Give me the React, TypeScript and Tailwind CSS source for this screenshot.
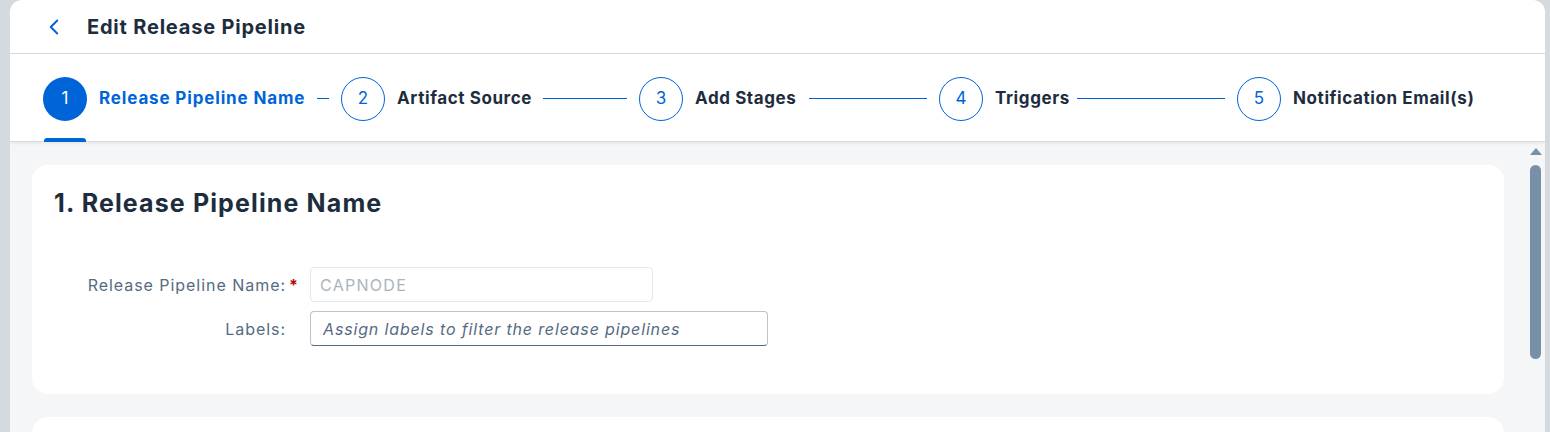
import { ChevronLeft } from "lucide-react";

const steps = [
  { n: 1, label: "Release Pipeline Name", width: 206, line: 12 },
  { n: 2, label: "Artifact Source", width: 134, line: 84 },
  { n: 3, label: "Add Stages", width: 102, line: 118 },
  { n: 4, label: "Triggers", width: 70, line: 148 },
  { n: 5, label: "Notification Email(s)", width: 184, line: 0 },
];

function Stepper() {
  return (
    <div className="h-[88px] shrink-0 border-b border-[#d9dde1] shadow-[0_1px_3px_rgba(0,0,0,0.08)] pl-[33px] pt-[2px] flex items-center relative z-10">
      {steps.map((s) => {
        const active = s.n === 1;
        return (
          <div key={s.n} className="flex items-center">
            <div className="relative flex items-center">
              <div
                className={
                  active
                    ? "size-11 rounded-full bg-[#0064d9] text-white flex items-center justify-center text-[17px]"
                    : "size-11 rounded-full border border-[#0064d9] text-[#0064d9] flex items-center justify-center text-[17px]"
                }
              >
                {s.n}
              </div>
              {active && (
                <div className="absolute left-[1px] top-[61px] h-[4px] w-[42px] rounded-t-[3px] bg-[#0064d9]" />
              )}
            </div>
            <span
              className={
                active
                  ? "ml-3 pt-[1px] whitespace-nowrap text-[17px] font-bold tracking-[0.05em] text-[#0064d9]"
                  : "ml-3 pt-[1px] whitespace-nowrap text-[17px] font-bold tracking-[0.035em] text-[#1d2d3e]"
              }
              style={{ width: s.width }}
            >
              {s.label}
            </span>
            {s.line > 0 && (
              <div className="mx-3 h-px bg-[#0064d9]" style={{ width: s.line }} />
            )}
          </div>
        );
      })}
    </div>
  );
}

function FormRow({
  label,
  required,
  children,
}: {
  label: string;
  required?: boolean;
  children: React.ReactNode;
}) {
  return (
    <div className="flex items-center">
      <div className="w-[244px] text-right text-[16px] tracking-[0.06em] text-[#556b82] flex justify-end items-center">
        <span>{label}</span>
        {required ? (
          <span className="w-[12px] text-[#aa0808] font-bold text-left pl-[3px]">*</span>
        ) : (
          <span className="w-[12px]" />
        )}
      </div>
      <div className="ml-3">{children}</div>
    </div>
  );
}

export default function App() {
  return (
    <div
      className="h-[432px] w-[1550px] overflow-hidden bg-[#d5dade] pl-[10px] pr-[5px] flex"
      style={{ fontFamily: "Inter, 'Noto Sans', Arial, sans-serif" }}
    >
      <div className="flex-1 flex flex-col bg-white rounded-t-[12px] overflow-hidden">
        <div className="h-[54px] shrink-0 border-b border-[#d9dde1] flex items-center pl-[31px]">
          <ChevronLeft className="size-[26px] text-[#0064d9]" strokeWidth={1.8} />
          <h1 className="ml-[20px] text-[20px] font-bold tracking-[0.04em] text-[#1d2d3e]">
            Edit Release Pipeline
          </h1>
        </div>
        <Stepper />
        <div className="flex-1 flex bg-[#f5f6f7] min-h-0">
          <div className="flex-1 px-[22px] pt-[23px] flex flex-col gap-[23px] overflow-hidden">
            <div className="h-[229px] shrink-0 bg-white rounded-[16px] px-[22px] pt-[22px]">
              <h2 className="text-[25px] leading-[32px] font-bold tracking-[0.045em] text-[#1d2d3e]">
                1. Release Pipeline Name
              </h2>
              <div className="mt-[48px] flex flex-col gap-[9px]">
                <FormRow label="Release Pipeline Name:" required>
                  <div className="w-[343px] h-[35px] rounded-[4px] border border-[#e5e8eb] px-[9px] flex items-center text-[16px] tracking-[0.08em] text-[#a9b4be]">
                    CAPNODE
                  </div>
                </FormRow>
                <FormRow label="Labels:">
                  <input
                    placeholder="Assign labels to filter the release pipelines"
                    className="w-[458px] h-[35px] rounded-[4px] border border-[#bcc3ca] border-b-[#556b82] bg-white px-[12px] text-[16px] italic tracking-[0.053em] placeholder:text-[#556b82] outline-none"
                  />
                </FormRow>
              </div>
            </div>
            <div className="h-[100px] shrink-0 bg-white rounded-[16px]" />
          </div>
          <div className="w-[19px] shrink-0 flex flex-col items-center pt-[6px]">
            <div className="w-0 h-0 border-l-[6px] border-r-[6px] border-b-[7px] border-l-transparent border-r-transparent border-b-[#7890a7]" />
            <div className="mt-[10px] w-[11px] h-[194px] rounded-full bg-[#7890a7]" />
          </div>
        </div>
      </div>
    </div>
  );
}
